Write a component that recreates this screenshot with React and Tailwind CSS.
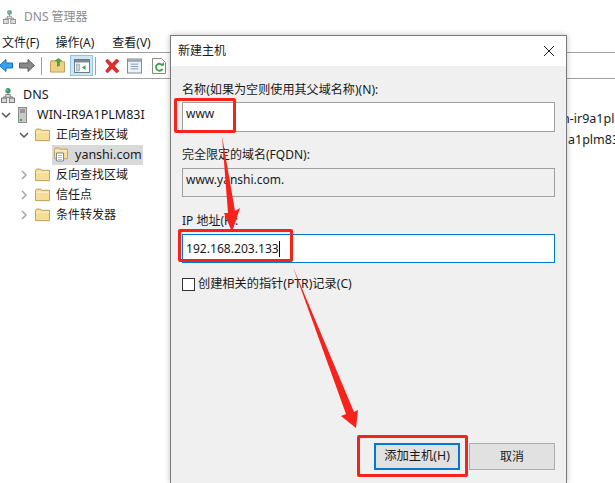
const font = { fontFamily: '"Noto Sans","Noto Sans CJK SC",sans-serif' };

function NetIcon({ className }) {
  return (
    <svg viewBox="0 0 16 18" className={className}>
      <circle cx="8" cy="3.5" r="3" fill="#3f9a58" />
      <circle cx="7" cy="2.6" r="1.2" fill="#5aa9e6" />
      <path d="M8 6v5M3 12V10.5H13V12" stroke="#6b6b6b" fill="none" />
      <rect x="5.5" y="8" width="5" height="3" fill="#d8d8d8" stroke="#6b6b6b" strokeWidth=".8" />
      <rect x="0.5" y="12" width="6" height="5" fill="#d8d8d8" stroke="#6b6b6b" />
      <rect x="9.5" y="12" width="6" height="5" fill="#d8d8d8" stroke="#6b6b6b" />
    </svg>
  );
}

function Folder({ className }) {
  return (
    <svg viewBox="0 0 16 14" className={className}>
      <path d="M.5 2.5V13h15V2H7L6 .7H1.5z" fill="#f6dd9a" stroke="#b99b56" />
      <path d="M1 4h14" stroke="#fff3cf" />
    </svg>
  );
}

function Chevron({ open }) {
  return (
    <svg viewBox="0 0 10 10" className="w-[10px] h-[10px] shrink-0">
      {open ? (
        <path d="M1 3l4 4 4-4" fill="none" stroke="#555" strokeWidth="1.5" />
      ) : (
        <path d="M3 1l4 4-4 4" fill="none" stroke="#a6a6a6" strokeWidth="1.5" />
      )}
    </svg>
  );
}

function Toolbar() {
  return (
    <div className="h-[26px] flex items-center border-b border-[#a0a0a0]">
      <svg viewBox="0 0 14 14" className="w-[14px] h-[15px] -ml-[1px]">
        <path d="M.5 7L7 1v3.5h6.5v5H7V13z" fill="#38a3ee" stroke="#1670b8" />
      </svg>
      <svg viewBox="0 0 16 14" className="w-[16px] h-[15px] ml-[6px]">
        <path d="M15.5 7L9 1v3.5H.5v5H9V13z" fill="#8a8a8a" stroke="#5f5f5f" />
      </svg>
      <div className="w-px h-[18px] bg-[#a0a0a0] ml-[6px]" />
      <svg viewBox="0 0 16 16" className="w-[15px] h-[15px] ml-[8px]">
        <path d="M.5 5V15h15V4H7L6 3H1z" fill="#f0d184" stroke="#b99b56" />
        <path d="M8 9V3H5.5L9 .5 12.5 3H10v5z" fill="#4caf3f" stroke="#2f7f28" strokeWidth=".6" />
      </svg>
      <div className="w-[23px] h-[21px] ml-[5px] bg-[#cfe6f7] border border-[#8cc4ea] flex items-center justify-center">
        <svg viewBox="0 0 16 14" className="w-[16px] h-[14px]">
          <rect x=".5" y=".5" width="15" height="13" fill="#fff" stroke="#6f7a85" />
          <rect x="1" y="1" width="14" height="2.5" fill="#7d8a96" />
          <rect x="2.5" y="5" width="3" height="7" fill="#c4d3df" stroke="#7d8a96" strokeWidth=".5" />
          <path d="M11.5 6v5L8 8.500z" fill="#39a845" />
        </svg>
      </div>
      <div className="w-px h-[18px] bg-[#a0a0a0] ml-[2px]" />
      <svg viewBox="0 0 16 16" className="w-[16px] h-[16px] ml-[8px]">
        <path d="M1.500 3L3.500 1 8 5.500 12.500 1 15 3 10.500 8 15 13 12.500 15 8 10.500 3.500 15 1.500 13 5.500 8z" fill="#e02d27" stroke="#a51e1a" strokeWidth=".5" />
      </svg>
      <svg viewBox="0 0 16 16" className="w-[15px] h-[16px] ml-[7px]">
        <rect x=".5" y=".5" width="15" height="15" fill="#eef1f3" stroke="#7b858d" />
        <rect x="1" y="1" width="14" height="2.500" fill="#9aa5ae" />
        <path d="M4 6h8M4 8.500h8M4 11h8" stroke="#6fa0c8" />
      </svg>
      <svg viewBox="0 0 14 16" className="w-[14px] h-[16px] ml-[10px]">
        <path d="M.5.500H9.500L13.500 4.500V15.500H.5z" fill="#fff" stroke="#8a8a8a" />
        <path d="M10.500 7.500A3.500 3.500 0 1 0 10.500 11" fill="none" stroke="#3aa346" strokeWidth="1.800" />
        <path d="M8.500 7.500h3.500V4z" fill="#3aa346" />
      </svg>
    </div>
  );
}

function Tree() {
  return (
    <div className="text-[12px] leading-[20px] text-[#1a1a1a]">
      <div className="h-[20px] flex items-center gap-[8px] ml-[1px]">
        <NetIcon className="w-[14px] h-[17px]" />
        <span className="text-[12.5px]">DNS</span>
      </div>
      <div className="h-[20px] flex items-center ml-[1px]">
        <Chevron open />
        <svg viewBox="0 0 9 16" className="w-[9px] h-[16px] ml-[7px]">
          <rect x=".5" y=".5" width="8" height="15" fill="#c9c9c9" stroke="#8a8a8a" />
          <path d="M2 3h5M2 5h5" stroke="#666" />
          <rect x="2" y="12" width="2" height="2" fill="#3aa346" />
        </svg>
        <span className="ml-[10px] text-[12.5px]">WIN-IR9A1PLM83I</span>
      </div>
      <div className="h-[20px] flex items-center ml-[19px]">
        <Chevron open />
        <Folder className="w-[15px] h-[14px] ml-[6px]" />
        <span className="ml-[6px]">正向查找区域</span>
      </div>
      <div className="h-[20px] flex items-center ml-[52px] w-[91px] bg-[#d9d9d9]">
        <div className="relative w-[16px] h-[16px] ml-[2px] shrink-0">
          <Folder className="w-[14px] h-[13px]" />
          <svg viewBox="0 0 8 9" className="absolute left-[2px] top-[5px] w-[8px] h-[10px]">
            <path d="M.5.500h7v8h-7z" fill="#fff" stroke="#7d8a96" />
            <path d="M2 3h4M2 5h4M2 7h4" stroke="#7d8a96" strokeWidth=".6" />
          </svg>
        </div>
        <span className="ml-[5px] text-[12.5px]">yanshi.com</span>
      </div>
      {["反向查找区域", "信任点", "条件转发器"].map((t) => (
        <div key={t} className="h-[20px] flex items-center ml-[19px]">
          <Chevron />
          <Folder className="w-[15px] h-[14px] ml-[6px]" />
          <span className="ml-[6px]">{t}</span>
        </div>
      ))}
    </div>
  );
}

function Overlay() {
  return (
    <>
      <div className="absolute left-[174px] top-[98px] w-[62px] h-[35px] border-[3px] border-[#f5231b] rounded-[2px]" />
      <div className="absolute left-[178px] top-[229px] w-[115px] h-[33px] border-[3px] border-[#f5231b] rounded-[2px]" />
      <div className="absolute left-[357px] top-[435px] w-[111px] h-[42px] border-[3px] border-[#f5231b] rounded-[2px]" />
      <svg className="absolute left-0 top-0 w-[615px] h-[483px] pointer-events-none" viewBox="0 0 615 483">
        <path d="M222 136L235 211L240 208L232 232L224 213L228 213z" fill="#f5231b" />
        <path d="M293 267L354 412L358 410L356 428L341 416L346 414z" fill="#f5231b" />
      </svg>
    </>
  );
}

export default function App() {
  return (
    <div style={font} className="relative w-[615px] h-[483px] bg-white overflow-hidden">
      <div className="h-[33px] flex items-center gap-[8px] pl-[3px]">
        <NetIcon className="w-[13px] h-[16px] opacity-80" />
        <span className="text-[12px] text-[#8c8c8c]">DNS 管理器</span>
      </div>
      <div className="h-[20px] flex items-center text-[12px] text-[#1a1a1a] border-b border-[#a0a0a0]">
        <span className="ml-[2px]">文件(F)</span>
        <span className="ml-[16px]">操作(A)</span>
        <span className="ml-[18px]">查看(V)</span>
      </div>
      <Toolbar />
      <div className="pt-[6px]">
        <Tree />
      </div>
      <div className="absolute left-[562px] top-[111px] whitespace-nowrap text-[12.5px] leading-[16px] text-[#1a1a1a]">n-ir9a1pl</div>
      <div className="absolute left-[568px] top-[132px] whitespace-nowrap text-[12.5px] leading-[16px] text-[#1a1a1a]">a1plm83</div>

      <div className="absolute left-[170px] top-[35px] w-[397px] h-[448px] flex flex-col border-x border-t border-[#7a7a7a] bg-[#f0f0f0] shadow-[0_0_6px_rgba(0,0,0,0.25)]">
        <div className="h-[30px] shrink-0 bg-white flex items-center justify-between pl-[7px] pr-[11px] text-[12px] text-[#1a1a1a]">
          <span>新建主机</span>
          <svg viewBox="0 0 12 12" className="w-[12px] h-[12px]">
            <path d="M1 1l10 10M11 1L1 11" stroke="#222" strokeWidth="1" />
          </svg>
        </div>
        <div className="flex-1 flex flex-col px-[11px] text-[12px] text-[#1a1a1a]">
          <div className="h-[36px] pt-[15px] leading-[18px] text-[12.1px]">名称(如果为空则使用其父域名称)(N):</div>
          <div className="h-[30px] bg-white border border-[#a0a0a0] pl-[3px] leading-[22px]">www</div>
          <div className="h-[36px] pt-[14px] leading-[18px]">完全限定的域名(FQDN):</div>
          <div className="h-[29px] bg-[#f0f0f0] border border-[#a0a0a0] pl-[3px] leading-[22px] text-[12px]">www.yanshi.com.</div>
          <div className="h-[37px] pt-[15px] leading-[18px]">IP 地址(P):</div>
          <div className="h-[29px] bg-white border border-[#0078d7] pl-[3px] leading-[25px] flex items-center text-[12.1px]">
            <span>192.168.203.133</span>
            <span className="w-px h-[16px] bg-black" />
          </div>
          <div className="mt-[13px] flex items-center gap-[3px] h-[16px]">
            <span className="w-[13px] h-[13px] bg-white border border-[#333]" />
            <span className="text-[12.2px]">创建相关的指针(PTR)记录(C)</span>
          </div>
          <div className="mt-auto mb-[13px] flex justify-end gap-[9px]">
            <button className="w-[86px] h-[27px] bg-[#e1e1e1] border-2 border-[#0078d7] text-[12.3px]">添加主机(H)</button>
            <button className="w-[86px] h-[27px] bg-[#e1e1e1] border border-[#adadad] text-[12px]">取消</button>
          </div>
        </div>
      </div>
      <Overlay />
    </div>
  );
}
